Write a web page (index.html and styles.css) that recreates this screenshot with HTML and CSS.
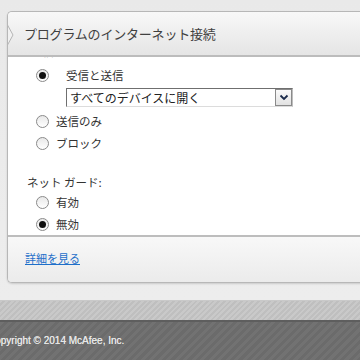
FILE: index.html
```html
<!DOCTYPE html>
<html lang="ja">
<head>
    <meta charset="UTF-8">
    <meta name="viewport" content="width=device-width, initial-scale=1.0">
    <title>プログラムのインターネット接続</title>
    <link rel="stylesheet" href="styles.css">
</head>
<body>
    <div class="page">
        <div class="panel">
            <div class="panel-header">
                <svg class="notch" width="8" height="20" viewBox="0 0 8 20">
                    <path d="M0.5 0 L6 10 L0.5 20" fill="#f1f1f1" stroke="#b5b5b5" stroke-width="1"/>
                </svg>
                <h1>プログラムのインターネット接続</h1>
            </div>

            <div class="panel-body">
                <div class="scroll">
                    <p class="group-label cut">着信接続:</p>

                    <div class="option first">
                        <span class="radio checked"></span>
                        <span class="option-text wide">受信と送信</span>
                    </div>
                    <div class="select">
                        <span class="select-text">すべてのデバイスに開く</span>
                        <span class="select-btn">
                            <svg width="10" height="7" viewBox="0 0 10 7">
                                <path d="M1.5 1.5 L5 5 L8.5 1.5" fill="none" stroke="#1a2a4a" stroke-width="1.8"/>
                            </svg>
                        </span>
                    </div>
                    <div class="option">
                        <span class="radio"></span>
                        <span class="option-text">送信のみ</span>
                    </div>
                    <div class="option">
                        <span class="radio"></span>
                        <span class="option-text">ブロック</span>
                    </div>

                    <p class="group-label">ネット ガード:</p>
                    <div class="option">
                        <span class="radio"></span>
                        <span class="option-text">有効</span>
                    </div>
                    <div class="option">
                        <span class="radio checked"></span>
                        <span class="option-text">無効</span>
                    </div>
                </div>
            </div>

            <div class="panel-footer">
                <a href="#" class="more-link">詳細を見る</a>
            </div>
        </div>
    </div>

    <div class="stripe"></div>
    <div class="footer">
        <p class="copyright">Copyright © 2014 McAfee, Inc.</p>
    </div>
</body>
</html>
```

FILE: styles.css
```css
* {
    margin: 0;
    padding: 0;
    box-sizing: border-box;
}

body {
    font-family: "Noto Sans CJK JP", "Liberation Sans", sans-serif;
    background: #ebebeb;
    width: 360px;
    height: 360px;
    overflow: hidden;
    color: #333;
}

.page {
    height: 301px;
    padding: 11px 0 0 7px;
    background: linear-gradient(#e9e9e9, #ededed);
    border-bottom: 1px solid #c9c9c9;
}

.panel {
    width: 370px;
    border: 1px solid #b7b7b7;
    border-right: none;
    border-radius: 5px 0 0 5px;
    box-shadow: 0 1px 2px rgba(0, 0, 0, 0.15);
    overflow: hidden;
}

.panel-header {
    position: relative;
    height: 45px;
    display: flex;
    align-items: center;
    padding-left: 16px;
    background: linear-gradient(#f8f8f8, #e5e5e5);
    border-bottom: 2px solid #bcbcbc;
}

.notch {
    position: absolute;
    left: -1px;
    top: 13px;
}

.panel-header h1 {
    font-size: 13px;
    font-weight: 400;
    color: #404040;
    letter-spacing: -0.2px;
    margin-top: -1px;
}

.panel-body {
    height: 180px;
    background: #fff;
    overflow: hidden;
    border-bottom: 2px solid #bdbdbd;
}

.scroll {
    padding-left: 26px;
}

.group-label {
    font-size: 11.5px;
    color: #333;
    height: 17px;
    line-height: 17px;
    margin-top: 20px;
    margin-left: -7px;
}

.group-label.cut {
    margin-top: -14px;
    margin-left: -3px;
    color: #444;
}

.option {
    display: flex;
    align-items: center;
    height: 22px;
}

.option.first {
    margin-top: 4px;
}

.radio {
    width: 13px;
    height: 13px;
    border-radius: 50%;
    border: 1px solid #8a8a8a;
    background: linear-gradient(#e8e8e8, #fff);
    display: flex;
    align-items: center;
    justify-content: center;
    flex: none;
    margin-left: 2px;
}

.radio.checked::after {
    content: "";
    width: 7px;
    height: 7px;
    border-radius: 50%;
    background: #111;
}

.option-text {
    font-size: 11.5px;
    color: #333;
    margin-left: 7px;
}

.option-text.wide {
    margin-left: 17px;
}

.select {
    display: flex;
    align-items: center;
    width: 227px;
    height: 19px;
    margin: 2px 0 3px 32px;
    border: 1px solid #6f6f6f;
    border-bottom-color: #dcdcdc;
    border-right-color: #bdbdbd;
    background: #fff;
}

.select-text {
    flex: 1;
    font-size: 12px;
    color: #222;
    padding-left: 3px;
    line-height: 17px;
}

.select-btn {
    width: 17px;
    height: 17px;
    border: 1px solid #8a8a8a;
    background: linear-gradient(#fafafa, #e2e2e2);
    display: flex;
    align-items: center;
    justify-content: center;
}

.panel-footer {
    height: 45px;
    background: linear-gradient(#f8f8f8, #ebebeb);
    padding: 7px 0 0 17px;
}

.more-link {
    font-size: 11px;
    color: #1e6fc9;
    text-decoration: underline;
}

.stripe {
    height: 21px;
    background: repeating-linear-gradient(135deg, #c9c9c9 0 2px, #bfbfbf 2px 4px);
    border-bottom: 2px solid #5e5e5e;
}

.footer {
    height: 40px;
    background: repeating-linear-gradient(135deg, #727272 0 3px, #6b6b6b 3px 6px);
    padding-top: 13px;
}

.copyright {
    font-family: "Liberation Sans", Arial, sans-serif;
    font-size: 10px;
    font-weight: 400;
    color: #e6e6e6;
    text-indent: -12px;
    text-shadow: 0 0 0.4px #e6e6e6;
}
```
